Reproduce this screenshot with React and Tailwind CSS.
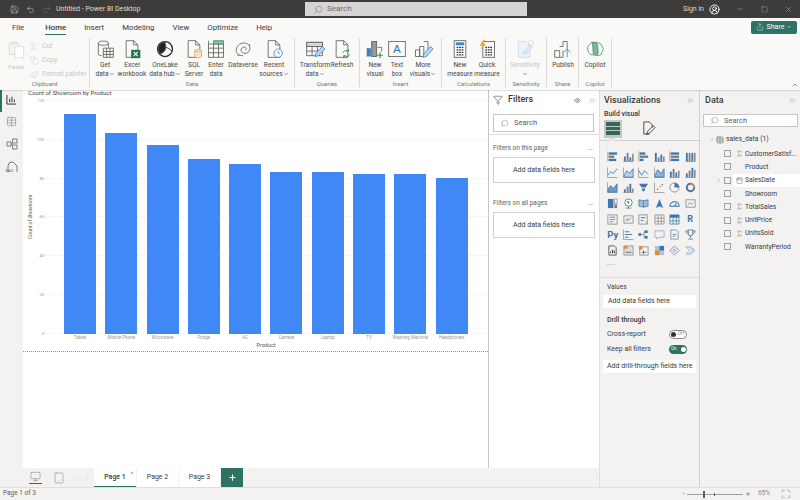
import React from 'react';
import {
  Save, Undo2, Redo2, Search, CircleUserRound, Minus, Square, X, ChevronDown, ChevronsRight,
  Eye, ChevronUp, Plus, Monitor, Tablet, Scissors, Copy, Paintbrush, ChevronRight, Sigma,
  Calendar, Table, ChevronLeft, Share, Filter, Maximize
} from 'lucide-react';

const FONT = 'font-["Roboto","Open_Sans",sans-serif]';
const BLUE = '#3f88f5';
const GREY = '#605e5c';

const Ic = ({ children, size = 20 }) => (
  <svg viewBox="0 0 24 24" width={size} height={size} fill="none" stroke={GREY} strokeWidth="1">
    {children}
  </svg>
);

const Doc = ({ color = GREY }) => <path d="M5 2h9l5 5v15H5zM14 2v5h5" stroke={color} />;

const ribbonIcons = {
  get: <Ic><ellipse cx="10" cy="5" rx="6" ry="2.5" /><path d="M4 5v13c0 1 1 2 4 2M16 5v5" /><path d="M10 11h12v11H10zM10 15h12M10 18.500h12M14 11v11M18 11v11" /></Ic>,
  excel: <Ic><Doc /><rect x="11" y="13" width="11" height="10" fill="#217346" stroke="none" /><path d="M14 15.500l5 5M19 15.500l-5 5" stroke="#fff" strokeWidth="1.300" /></Ic>,
  lake: <Ic><circle cx="12" cy="12" r="9" stroke="#252423" strokeWidth="1.500" /><path d="M12 3a9 9 0 0 0-6 15c4-1 7-4 7-8s-1-5-1-7z" fill="#252423" /><path d="M13 10c3 1 6 3 8 5" stroke="#252423" /></Ic>,
  sql: <Ic><Doc /><path d="M13 14c0-2 8-2 8 0v7c0 2-8 2-8 0z" fill="#fbe6c8" stroke="#d9a55b" /><path d="M13 14c0 2 8 2 8 0" stroke="#d9a55b" /></Ic>,
  enter: <Ic><path d="M3 6h18v16H3zM3 11h18M3 16.500h18M9 6v16M15 6v16" /><path d="M3 2v4M9 2h12v4H9z" fill="#8cbfa0" stroke="#3f8f60" /></Ic>,
  dataverse: <Ic><path d="M12 20c-6 0-9-4-8-8 1-5 6-8 11-7 4 1 6 4 5 8-1 3-4 5-7 4-3-1-4-3-3-5 1-2 3-3 5-2 1 1 1 3 0 3" /><path d="M8 19c-1 1-2 1-3 0M19 6c1 1 1 2 1 3" /></Ic>,
  recent: <Ic><Doc /><circle cx="17" cy="17" r="5" fill="#fff" stroke="#3a86c8" /><path d="M17 14.500V17l2 1" stroke="#3a86c8" /></Ic>,
  transform: <Ic><path d="M2 4h19v16H2zM2 9h19M2 14.500h19M8.500 4v16M15 4v16" /><path d="M2 4h19v5H2z" fill="#d8d6d4" /><path d="M12 21l1-4 8-8 3 3-8 8z" fill="#bcd8f0" stroke="#3a86c8" /></Ic>,
  refresh: <Ic><Doc /><path d="M13 17a4 4 0 0 1 7-2M21 18a4 4 0 0 1-7 2" stroke="#3f8f60" /><path d="M20 12v3h-3M14 23v-3h3" stroke="#3f8f60" /></Ic>,
  visual: <Ic><rect x="2" y="11" width="5" height="10" fill="#3f7fb8" stroke="none" /><rect x="8" y="3" width="6" height="18" fill="#9a9896" stroke="#605e5c" /><path d="M15 10h5v5" /><path d="M18 16v7M14.500 19.500h7" stroke="#3f8f60" strokeWidth="1.400" /></Ic>,
  textbox: <Ic><rect x="2" y="3" width="20" height="18" /><text x="12" y="17" fontSize="14" textAnchor="middle" fill="#2b7cc4" stroke="none" fontFamily="Liberation Sans">A</text></Ic>,
  more: <Ic><path d="M3 13h5v8H3zM8 9h5v12H8zM13 3h5v12" /><path d="M12 22l1-4 8-9 3 3-8 9z" fill="#bcd8f0" stroke="#3a86c8" /></Ic>,
  measure: <Ic><rect x="5" y="2" width="14" height="20" /><rect x="7" y="4" width="10" height="3.500" fill="#3a86c8" stroke="none" /><path d="M8 10h2M11 10h2M14 10h2M8 13h2M11 13h2M14 13h2M8 16h2M11 16h2M14 16h2M8 19h2M11 19h2M14 19h2" stroke="#323130" strokeWidth="1.500" /></Ic>,
  quick: <Ic><rect x="7" y="3" width="14" height="19" /><path d="M10 10h2M13 10h2M16 10h2M10 13h2M13 13h2M16 13h2M10 16h2M13 16h2M16 16h2M10 19h2M13 19h2M16 19h2" stroke="#323130" strokeWidth="1.500" /><path d="M8 1L3 8h3l-2 5 7-7H8l2-5z" fill="#eda63f" stroke="none" /></Ic>,
  sensitivity: <Ic><path d="M4 3h10l4 4v15H4z" stroke="#c8d8e4" fill="#eef3f7" /><path d="M9 17l9-10 3 3-9 9z" stroke="#c8d8e4" fill="#dde8f0" /><circle cx="19" cy="5" r="3" stroke="#c8d8e4" /></Ic>,
  publish: <Ic><path d="M2 14h6v8H2zM8 9h4v-6h5v9M12 14v8H8" /><path d="M17 22V12M13 16l4-4 4 4" stroke="#3a86c8" /></Ic>,
  copilot: <Ic size={20}><path d="M8 4h7l4 2 3 6-3 7-4 1-2-4-1-8z" fill="#fff" stroke="#4d8f70" /><path d="M8 4L3 10l1 6 3 3h8l-2-4-1-8z" fill="#fff" stroke="#4d8f70" /><path d="M9 5l3-1 3 2 1 11-3 3-3-2z" fill="#7fb897" stroke="#4d8f70" /></Ic>,
};

const Caret = () => <ChevronDown size={6} strokeWidth={2.500} className="inline-block text-[#605e5c]" />;

const RibbonButton = ({ icon, lines, w, caret, dim }) => (
  <div className={`flex flex-col items-center shrink-0 ${w}`}>
    <div className="h-[22px] flex items-center justify-center">{ribbonIcons[icon]}</div>
    <div className={`text-center text-[6.600px] leading-[9px] whitespace-nowrap mt-[1px] ${dim ? 'text-[#c8c6c4]' : 'text-[#4a4846]'}`}>
      {lines.map((l, i) => (
        <div key={l}>
          {l}
          {caret && i === lines.length - 1 && <Caret />}
        </div>
      ))}
    </div>
  </div>
);

const RibbonGroup = ({ label, w, pad, children }) => (
  <div className={`flex flex-col shrink-0 border-r border-[#dcdad8] h-[49px] mt-[2px] ${w}`}>
    <div className={`flex flex-1 ${pad}`}>{children}</div>
    <div className="text-center text-[6px] leading-[7px] text-[#797775]">{label}</div>
  </div>
);

const Ribbon = () => (
  <div className="h-[54px] bg-[#f9f9f8] flex relative shadow-[0_1px_1px_rgba(0,0,0,0.12)] z-10">
    <RibbonGroup label="Clipboard" w="w-[90px]" pad="pl-[6px]">
      <div className="flex flex-col items-center w-[20px] shrink-0 text-[#c8c6c4]">
        <svg viewBox="0 0 24 24" width="19" height="22" fill="none" stroke="#dad8d6" strokeWidth="1"><path d="M3 5h12v14H3z" fill="#faf3e6" /><path d="M10 9h11v14H10z" fill="#fff" /><path d="M6 5V3h6v2" /></svg>
        <span className="text-[6px] mt-[2px]">Paste</span>
      </div>
      <div className="flex flex-col gap-[4px] text-[6.800px] leading-[10px] text-[#c8c6c4] ml-[4px] mt-[3px]">
        <div className="flex items-center gap-[3px]"><Scissors size={9} strokeWidth={1} />Cut</div>
        <div className="flex items-center gap-[3px]"><Copy size={9} strokeWidth={1} />Copy</div>
        <div className="flex items-center gap-[3px] whitespace-nowrap"><Paintbrush size={9} strokeWidth={1} />Format painter</div>
      </div>
    </RibbonGroup>
    <RibbonGroup label="Data" w="w-[205px]" pad="pl-[3px]">
      <RibbonButton icon="get" lines={['Get', 'data']} caret w="w-[24px]" />
      <RibbonButton icon="excel" lines={['Excel', 'workbook']} w="w-[30px]" />
      <RibbonButton icon="lake" lines={['OneLake', 'data hub']} caret w="w-[36px]" />
      <RibbonButton icon="sql" lines={['SQL', 'Server']} w="w-[22px]" />
      <RibbonButton icon="enter" lines={['Enter', 'data']} w="w-[22px]" />
      <RibbonButton icon="dataverse" lines={['Dataverse']} w="w-[32px]" />
      <RibbonButton icon="recent" lines={['Recent', 'sources']} caret w="w-[30px]" />
    </RibbonGroup>
    <RibbonGroup label="Queries" w="w-[65px]" pad="pl-[5px]">
      <RibbonButton icon="transform" lines={['Transform', 'data']} caret w="w-[30px]" />
      <RibbonButton icon="refresh" lines={['Refresh']} w="w-[24px]" />
    </RibbonGroup>
    <RibbonGroup label="Insert" w="w-[82px]" pad="pl-[5px]">
      <RibbonButton icon="visual" lines={['New', 'visual']} w="w-[20px]" />
      <RibbonButton icon="textbox" lines={['Text', 'box']} w="w-[24px]" />
      <RibbonButton icon="more" lines={['More', 'visuals']} caret w="w-[28px]" />
    </RibbonGroup>
    <RibbonGroup label="Calculations" w="w-[64px]" pad="pl-[4px]">
      <RibbonButton icon="measure" lines={['New', 'measure']} w="w-[28px]" />
      <RibbonButton icon="quick" lines={['Quick', 'measure']} w="w-[26px]" />
    </RibbonGroup>
    <RibbonGroup label="Sensitivity" w="w-[41px]" pad="pl-[1px]">
      <RibbonButton icon="sensitivity" lines={['Sensitivity', '']} caret dim w="w-[36px]" />
    </RibbonGroup>
    <RibbonGroup label="Share" w="w-[32px]">
      <RibbonButton icon="publish" lines={['Publish']} w="w-[32px]" />
    </RibbonGroup>
    <RibbonGroup label="Copilot" w="w-[33px]">
      <RibbonButton icon="copilot" lines={['Copilot']} w="w-[32px]" />
    </RibbonGroup>
    <ChevronUp size={8} className="absolute right-[1px] bottom-[1px] text-[#605e5c]" />
  </div>
);

const TitleBar = () => (
  <div className="h-[18px] bg-[#3e3c3a] flex items-center text-[#dedcda] shrink-0">
    <Save size={9} strokeWidth={1.200} className="ml-[10px]" />
    <Undo2 size={9} strokeWidth={1.200} className="ml-[7px]" />
    <Redo2 size={9} strokeWidth={1.200} className="ml-[7px] text-[#7a7876]" />
    <span className="ml-[5px] w-[249px] text-[7px]">Untitled - Power BI Desktop</span>
    <div className="w-[222px] h-[14px] bg-[#d6d5d4] flex items-center text-[#6e6c6a] text-[8px]">
      <Search size={9} strokeWidth={1.200} className="ml-[9px] -scale-x-100" />
      <span className="ml-[4px]">Search</span>
    </div>
    <span className="ml-auto text-[7px]">Sign in</span>
    <CircleUserRound size={11} className="ml-[5px] text-white" />
    <Minus size={8} strokeWidth={1} className="ml-[16px]" />
    <Square size={7} strokeWidth={1} className="ml-[17px]" />
    <X size={9} strokeWidth={1} className="ml-[16px] mr-[7px]" />
  </div>
);

const tabs = ['File', 'Home', 'Insert', 'Modeling', 'View', 'Optimize', 'Help'];

const TabBar = () => (
  <div className="h-[18px] bg-[#f9f9f8] flex items-center pl-[12px] gap-[18px] text-[7.800px] text-[#3b3a39] relative shrink-0">
    {tabs.map((t) => (
      <span
        key={t}
        className={t === 'Home' ? 'font-medium border-b-[1.500px] border-[#2e7263] leading-[13px] ml-[3px] mt-[1px]' : 'leading-[13px]'}
      >
        {t}
      </span>
    ))}
    <div className="ml-auto mr-[3px] w-[46px] h-[13px] rounded-[2px] bg-[#2e7263] text-white flex items-center justify-center gap-[2px] text-[7px]">
      <Share size={8} strokeWidth={1.200} />
      <span className="ml-[1px]">Share</span>
      <ChevronDown size={6} />
    </div>
  </div>
);

const Rail = () => (
  <div className="w-[23px] bg-[#f3f2f1] flex flex-col items-center shrink-0 relative pt-[4px] gap-[11px] text-[#605e5c]">
    <div className="absolute left-0 top-0 h-[22px] w-[2px] bg-[#2e7263]" />
    <svg viewBox="0 0 12 12" width="11" height="11" fill="none" stroke="#252423" strokeWidth="1"><path d="M1 1v10h10M4 9V5M6.500 9V3M9 9V6" /></svg>
    <Table size={11} strokeWidth={0.900} />
    <svg viewBox="0 0 12 12" width="12" height="12" fill="none" stroke="#605e5c" strokeWidth="0.800"><path d="M1 4h4v4H1zM6.500 1H11v4H6.500zM6.500 7H11v4H6.500zM5 6h1.500" /></svg>
    <div className="relative w-[12px] h-[12px]">
      <svg viewBox="0 0 12 12" width="12" height="12" fill="none" stroke="#605e5c" strokeWidth="0.800"><path d="M2 11V5a4 4 0 0 1 4-4h1l4 4v6" /></svg>
      <span className="absolute left-0 bottom-0 text-[4px] leading-[5px]">DAX</span>
    </div>
  </div>
);

const sales = [
  { name: 'Tablet', value: 113 },
  { name: 'Mobile Phone', value: 103 },
  { name: 'Microwave', value: 97 },
  { name: 'Fridge', value: 90 },
  { name: 'AC', value: 87 },
  { name: 'Camera', value: 83 },
  { name: 'Laptop', value: 83 },
  { name: 'TV', value: 82 },
  { name: 'Washing Machine', value: 82 },
  { name: 'Headphones', value: 80 },
];

const ticks = [120, 100, 80, 60, 40, 20, 0];

const Chart = () => (
  <div className="h-[262px] border-b border-dotted border-[#999] flex flex-col bg-white shrink-0">
    <div className="pl-[5px] h-[10px] text-[6px] leading-[6px] text-[#444]">Count of Showroom by Product</div>
    <div className="flex">
      <div className="w-[12px] h-[234px] flex items-center justify-center shrink-0">
        <span className="-rotate-90 whitespace-nowrap text-[5px] text-[#555] translate-x-[2px]">Count of Showroom</span>
      </div>
      <div className="w-[9px] h-[234px] flex flex-col justify-between items-end shrink-0 text-[4px] leading-[1px] text-[#999]">
        {ticks.map((t) => <span key={t}>{t}</span>)}
      </div>
      <div className="relative flex-1">
        <div className="absolute inset-0 flex flex-col justify-between h-[234px]">
          {ticks.map((t) => <div key={t} className="border-t border-dotted border-[#eeeeee]" />)}
        </div>
        <div className="relative h-[234px] flex items-end pl-[20px] gap-[9.300px]">
          {sales.map((s) => (
            <div key={s.name} className="w-[32px] shrink-0" style={{ height: `${(s.value / 120) * 234}px`, backgroundColor: BLUE }} />
          ))}
        </div>
        <div className="flex pl-[20px] gap-[9.300px] mt-[1px]">
          {sales.map((s) => (
            <div key={s.name} className="w-[32px] shrink-0 text-[4.500px] leading-[6px] text-[#999] whitespace-nowrap flex justify-center">{s.name}</div>
          ))}
        </div>
      </div>
    </div>
    <div className="text-center text-[5.500px] leading-[6px] text-[#555] pl-[21px] mt-[1px]">Product</div>
  </div>
);

const PageTabs = () => (
  <div className="h-[19px] bg-[#f3f2f1] flex items-stretch text-[7px] text-[#3b3a39] shrink-0">
    <div className="w-[24px] flex flex-col items-center justify-end ml-0">
      <Monitor size={11} strokeWidth={0.900} className="text-[#605e5c]" />
      <div className="w-[13px] h-[1.500px] bg-[#2e7263] mt-[1px] mb-[3px]" />
    </div>
    <div className="w-[24px] flex items-center justify-center"><Tablet size={12} strokeWidth={0.800} className="text-[#605e5c]" /></div>
    <div className="w-[23px] flex items-center justify-center gap-[5px] text-[#c8c6c4]">
      <ChevronLeft size={5} /><ChevronRight size={5} />
    </div>
    <div className="w-[42px] bg-white border-b-[1.500px] border-[#2e7263] flex items-center justify-center font-medium relative">
      Page 1
      <X size={4} strokeWidth={2} className="absolute right-[2px] top-[3px]" />
    </div>
    <div className="w-[42px] bg-white border-l border-[#f3f2f1] flex items-center justify-center">Page 2</div>
    <div className="w-[42px] bg-white border-l border-[#f3f2f1] flex items-center justify-center">Page 3</div>
    <div className="w-[22px] ml-[1px] bg-[#2e7263] flex items-center justify-center text-white"><Plus size={9} strokeWidth={3} /></div>
  </div>
);

const SearchBox = ({ h, w }) => (
  <div className={`bg-white border border-[#c8c6c4] flex items-center text-[7.500px] text-[#605e5c] ${h} ${w}`}>
    <Search size={9} strokeWidth={1} className="ml-[6px] -scale-x-100" />
    <span className="ml-[5px]">Search</span>
  </div>
);

const Dropzone = ({ title }) => (
  <div className="mx-[4px]">
    <div className="flex justify-between items-center h-[11px] text-[6.500px] text-[#605e5c] pr-[3px]">
      <span>{title}</span><span>...</span>
    </div>
    <div className="mt-[3px] h-[26px] w-[102px] border border-[#d2d0ce] flex items-center justify-center text-[7px] text-[#3b3a39]">Add data fields here</div>
  </div>
);

const Filters = () => (
  <div className="w-[112px] bg-white border-l border-[#c8c6c4] flex flex-col shrink-0 mb-[19px]">
    <div className="flex items-center h-[24px] pl-[4px] pr-[3px] pb-[4px]">
      <Filter size={10} strokeWidth={1.300} className="text-[#3b3a39]" />
      <span className="ml-[5px] text-[9px] font-medium text-[#3b3a39]">Filters</span>
      <Eye size={7} className="ml-auto text-[#605e5c]" />
      <ChevronsRight size={9} strokeWidth={1} className="ml-[7px] text-[#605e5c]" />
    </div>
    <div className="px-[4px] pb-[2px] border-b border-[#e1dfdd]">
      <SearchBox h="h-[18px]" w="w-[101px]" />
    </div>
    <div className="mt-[8px]"><Dropzone title="Filters on this page" /></div>
    <div className="mt-[15px]"><Dropzone title="Filters on all pages" /></div>
  </div>
);

const B = '#3a78ad';
const G = '#7f7d7b';
const O = '#dd8f3a';

const hb = (a, b, c) => (
  <>
    <path d="M1 0.500v11" stroke={G} strokeWidth="0.800" />
    <rect x="2" y="1.500" width={a} height="2.500" fill={B} />
    <rect x="2" y="5" width={b} height="2.500" fill={G} />
    <rect x="2" y="8.500" width={c} height="2.500" fill={B} />
  </>
);
const vb = (a, b, c, d) => (
  <>
    <path d="M0.500 11.500h11" stroke={G} strokeWidth="0.800" />
    <rect x="1" y={11 - a} width="2" height={a} fill={B} />
    <rect x="4" y={11 - b} width="2" height={b} fill={G} />
    <rect x="7" y={11 - c} width="2" height={c} fill={B} />
    <rect x="10" y={11 - d} width="1.500" height={d} fill={G} />
  </>
);
const ln = (d, fill) => (
  <>
    <path d="M0.500 0.500v11h11" stroke={G} strokeWidth="0.700" fill="none" />
    <path d={d} stroke={B} strokeWidth="0.900" fill={fill || 'none'} />
  </>
);
const box = <path d="M1 2h10v8H1z" stroke={G} strokeWidth="0.800" fill="none" />;

const TextIcon = ({ t, size }) => (
  <span className={`font-bold text-[#3a78ad] leading-[12px] ${size}`}>{t}</span>
);

const vizIcons = [
  hb(9, 6, 8), vb(5, 9, 4, 8), hb(6, 9, 4), vb(9, 4, 7, 5), hb(9, 9, 9), vb(9, 9, 9, 9),
  ln('M1 9l3-4 3 2 4-5'), ln('M1 10l3-6 3 3 4-5V11H1z', '#bcd3e6'), ln('M1 4l3 5 3-5 4 4'), ln('M1 9l3-6 4 4 3-5V11H1z', '#8fb3d1'), vb(6, 9, 5, 7), vb(4, 7, 10, 8),
  ln('M1 8l3-4 3 3 4-5V11H1z', '#6f9cc2'), vb(3, 6, 9, 4),
  <path d="M1 2h10L8 6H4zM4 7h4l-1 3H5z" fill={B} />,
  <><path d="M0.500 0.500v11h11" stroke={G} strokeWidth="0.700" fill="none" /><circle cx="4" cy="8" r="0.800" fill={B} /><circle cx="7" cy="5" r="0.800" fill={O} /><circle cx="9" cy="3" r="0.800" fill={B} /></>,
  <><circle cx="6" cy="6" r="5" fill="none" stroke={G} strokeWidth="0.900" /><path d="M6 1a5 5 0 0 1 5 5H6z" fill={B} /></>,
  <><circle cx="6" cy="6" r="4" fill="none" stroke={B} strokeWidth="2.200" /><path d="M6 2a4 4 0 0 1 4 4" stroke={O} strokeWidth="2.200" fill="none" /></>,
  <><rect x="1" y="1" width="6" height="10" fill={B} /><rect x="8" y="1" width="3" height="5" fill="none" stroke={G} strokeWidth="0.700" /><rect x="8" y="7" width="3" height="4" fill={G} /></>,
  <><circle cx="6" cy="5" r="4" fill="#fff" stroke="#4d8f70" /><path d="M4 3l3 1-1 3z" fill={B} /><path d="M6 9v2M3 11h6" stroke={G} /></>,
  <path d="M1 2c2 0 3 1 5 1s3-1 5-1v7c-2 0-3 1-5 1s-3-1-5-1zM6 3v7" fill="#9dbcd6" stroke={B} strokeWidth="0.800" />,
  <path d="M6 1l4 10-4-2-4 2z" fill={B} />,
  <path d="M1 9a5 5 0 0 1 10 0zM6 9l2-3" fill="none" stroke={B} strokeWidth="1.200" />,
  <><rect x="1" y="2" width="10" height="8" fill="none" stroke={G} strokeWidth="0.800" /><path d="M3 8l2-3 2 2 2-2" stroke={B} fill="none" strokeWidth="0.700" /></>,
  <><rect x="1" y="1" width="10" height="10" fill="none" stroke={G} strokeWidth="0.800" /><path d="M3 3.500h6M3 6h6M3 8.500h4" stroke={B} strokeWidth="0.800" /></>,
  <>{box}<path d="M3 8l2-3 1 2 3-3" stroke={B} strokeWidth="0.800" fill="none" /></>,
  <><rect x="1" y="1" width="9" height="10" fill="none" stroke={G} strokeWidth="0.800" /><path d="M3 4h5M3 7h3" stroke={B} /><path d="M8 8l3 3" stroke={O} /></>,
  <path d="M1 1h10v10H1zM1 4.500h10M1 8h10M4.500 1v10M8 1v10" stroke={G} strokeWidth="0.700" fill="none" />,
  <><rect x="1" y="1" width="10" height="3" fill={B} /><path d="M1 1h10v10H1zM1 7.500h10M4.500 1v10M8 1v10" stroke={B} strokeWidth="0.800" fill="none" /></>,
  <TextIcon t="R" size="text-[9px]" />,
  <TextIcon t="Py" size="text-[9.500px]" />,
  <><path d="M0.500 0.500v11h11" stroke={G} strokeWidth="0.700" fill="none" /><path d="M2 3h5M2 6h8M2 9h4" stroke={B} /></>,
  <><rect x="0.500" y="4.500" width="3" height="3" fill={B} /><path d="M3.500 6h3M6.500 3v6" stroke={G} strokeWidth="0.700" /><rect x="7" y="1.500" width="3.500" height="3" fill={B} /><rect x="7" y="7.500" width="3.500" height="3" fill={B} /></>,
  <path d="M1 2h10v7H5l-2 2V9H1z" fill="none" stroke="#7fa6c6" strokeWidth="0.800" />,
  <><path d="M2 1h6l2 2v8H2z" fill="none" stroke={G} strokeWidth="0.800" /><path d="M4 6h4M4 8h3" stroke={B} strokeWidth="0.800" /></>,
  <><path d="M3.500 1h5v4a2.500 2.500 0 0 1-5 0zM6 7.500V10M3.500 11h5M3.500 2H1c0 2 1 3 2.500 3M8.500 2H11c0 2-1 3-2.500 3" fill="none" stroke="#4d6f88" strokeWidth="0.900" /></>,
  <><path d="M2 1h6l2 2v8H2z" fill="none" stroke="#323130" strokeWidth="0.800" /><path d="M4 9V7M6 9V5M8 9V6" stroke="#323130" /></>,
  <><rect x="1" y="1" width="10" height="10" fill="#dedcda" stroke={G} strokeWidth="0.700" /><path d="M1 1h4v3H1z" fill={O} /><path d="M3 8h6" stroke={B} /></>,
  <><rect x="2" y="2" width="9" height="9" fill="none" stroke={G} strokeWidth="0.800" /><path d="M1 1h4v4H1z" fill={O} /><path d="M4 8h5M6 6v4" stroke={B} /></>,
  <><rect x="1" y="1" width="10" height="10" fill="#a9c6de" /><path d="M1 6h5v5H1z" fill={O} /><path d="M6 1h5v5H6z" fill={B} /></>,
  <><path d="M6 1l5 5-5 5-5-5z" fill="none" stroke="#8a76b8" strokeWidth="0.900" /><circle cx="6" cy="6" r="1.500" fill="none" stroke="#8a76b8" strokeWidth="0.700" /></>,
  <path d="M1 2h5l5 4-5 4H1l4-4zM4 2l5 4-5 4" fill="none" stroke="#7fa6c6" strokeWidth="0.800" />,
];

const VizGrid = () => (
  <div className="grid grid-cols-[repeat(6,15.500px)] auto-rows-[15.600px] pl-[5px] mt-[8px]">
    {vizIcons.map((icon, i) => (
      <div key={i} className="flex items-center justify-center">
        {i === 29 || i === 30 ? icon : <svg viewBox="0 0 12 12" width="11" height="11">{icon}</svg>}
      </div>
    ))}
    <div className="col-span-6 h-[12px] pl-[2px] text-[7px] leading-[10px] tracking-[1px] text-[#605e5c]">...</div>
  </div>
);

const Toggle = ({ on }) =>
  on ? (
    <div className="w-[18px] h-[9px] rounded-full bg-[#2e7263] flex items-center justify-between pl-[2px] pr-[1px] text-white text-[4.500px]">
      On<div className="w-[5px] h-[5px] rounded-full bg-white" />
    </div>
  ) : (
    <div className="w-[18px] h-[9px] rounded-full bg-white border border-[#8a8886] flex items-center justify-between pl-[1px] pr-[2px] text-[#8a8886] text-[4.500px]">
      <div className="w-[4.500px] h-[4.500px] rounded-full bg-[#323130]" />Off
    </div>
  );

const Visualizations = () => (
  <div className="w-[100px] bg-[#f3f2f1] border-l border-[#e1dfdd] flex flex-col shrink-0">
    <div className="flex items-center justify-between h-[20px] pl-[4px] pr-[4px] pt-[1px]">
      <span className="text-[9px] font-medium text-[#3b3a39]">Visualizations</span>
      <ChevronsRight size={9} strokeWidth={1} className="text-[#605e5c]" />
    </div>
    <div className="pl-[4px] text-[7px] font-medium text-[#3b3a39] leading-[9px]">Build visual</div>
    <div className="flex items-center h-[22px] pl-[4px] pb-[2px] relative border-b border-[#d2d0ce]">
      <div className="w-[18px] h-[18px] bg-[#c8c6c4] flex flex-col justify-center gap-[1px] px-[2px]">
        <div className="h-[3.500px] bg-[#2e6a58]" /><div className="h-[3.500px] bg-[#2e6a58]" /><div className="h-[3.500px] bg-[#2e6a58]" />
      </div>
      <svg viewBox="0 0 16 16" width="15" height="15" fill="none" stroke="#323130" strokeWidth="0.900" className="ml-[19px]">
        <path d="M3 1h6l3 3v3M3 1v13h6M6 14l1-3 6-6 2 2-6 6z" />
      </svg>
      <div className="absolute left-[10px] -bottom-[3px] w-[5px] h-[5px] rotate-45 bg-[#f3f2f1] border-l border-t border-[#d2d0ce]" />
    </div>
    <VizGrid />
    <div className="border-t border-[#e1dfdd] mt-[3px] pl-[7px] pt-[5px] text-[6.500px] leading-[8px] text-[#3b3a39]">Values</div>
    <div className="mx-[3px] mt-[4px] h-[13px] bg-white flex items-center pl-[5px] text-[7px] text-[#3b3a39]">Add data fields here</div>
    <div className="pl-[7px] mt-[8px] text-[7px] font-medium leading-[8px] text-[#3b3a39]">Drill through</div>
    <div className="flex items-center justify-between pl-[7px] pr-[12px] mt-[5px] h-[11px] text-[7px] text-[#3b3a39]">Cross-report<Toggle /></div>
    <div className="flex items-center justify-between pl-[7px] pr-[12px] mt-[4px] h-[11px] text-[7px] text-[#3b3a39]">Keep all filters<Toggle on /></div>
    <div className="mx-[3px] mt-[5px] h-[13px] bg-white flex items-center pl-[4px] text-[7px] text-[#3b3a39]">Add drill-through fields here</div>
  </div>
);

const fields = [
  { name: 'CustomerSatisf...', icon: 'sum' },
  { name: 'Product' },
  { name: 'SalesDate', icon: 'date', active: true },
  { name: 'Showroom' },
  { name: 'TotalSales', icon: 'sum' },
  { name: 'UnitPrice', icon: 'sum' },
  { name: 'UnitsSold', icon: 'sum' },
  { name: 'WarrantyPeriod' },
];

const DataPane = () => (
  <div className="w-[101px] bg-[#f3f2f1] border-l border-[#d2d0ce] flex flex-col shrink-0">
    <div className="flex items-center justify-between h-[20px] pl-[5px] pr-[3px] pt-[1px]">
      <span className="text-[9px] font-medium text-[#3b3a39]">Data</span>
      <ChevronsRight size={9} strokeWidth={1} className="text-[#605e5c]" />
    </div>
    <div className="pl-[3px] mt-[4px]"><SearchBox h="h-[13px]" w="w-[95px]" /></div>
    <div className="flex items-center h-[13px] pl-[8px] mt-[6px] mb-[1px] text-[6.800px] text-[#3b3a39]">
      <ChevronDown size={7} strokeWidth={1} className="text-[#605e5c]" />
      <Table size={8} strokeWidth={1.200} className="ml-[1px] text-[#323130]" />
      <span className="ml-[2px]">sales_data (1)</span>
    </div>
    {fields.map((f) => (
      <div key={f.name} className="flex items-center h-[13.300px] pl-[17px] text-[6.700px] text-[#3b3a39] relative">
        {f.active && <ChevronRight size={7} strokeWidth={1} className="absolute left-[15px] text-[#605e5c]" />}
        <div className="w-[7px] h-[7px] border border-[#a19f9d] bg-[#f3f2f1] ml-[7px] shrink-0" />
        <div className={`flex items-center h-full flex-1 ml-[2px] ${f.active ? 'bg-white' : ''}`}>
          <div className="w-[12px] flex justify-center shrink-0">
            {f.icon === 'sum' && <Sigma size={7} strokeWidth={1.200} />}
            {f.icon === 'date' && <Calendar size={7} strokeWidth={1.200} />}
          </div>
          <span className="whitespace-nowrap">{f.name}</span>
        </div>
      </div>
    ))}
  </div>
);

const StatusBar = () => (
  <div className="h-[13px] bg-[#f3f2f1] border-t border-[#e1dfdd] flex items-center pl-[3px] text-[6.500px] text-[#605e5c] shrink-0">
    <span>Page 1 of 3</span>
    <span className="ml-auto text-[7px] leading-none">-</span>
    <div className="ml-[2px] w-[56px] h-[1px] bg-[#a19f9d] relative">
      <div className="absolute left-[16px] -top-[3px] w-[2px] h-[7px] bg-[#605e5c]" />
      <div className="absolute left-[27px] -top-[1px] w-[1px] h-[3px] bg-[#605e5c]" />
    </div>
    <Plus size={6} className="ml-[2px]" />
    <span className="ml-[7px] text-[#8a8886]">65%</span>
    <Maximize size={10} strokeWidth={1} className="ml-[11px] mr-[9px]" />
  </div>
);

export default function App() {
  return (
    <div className={`w-[800px] h-[500px] overflow-hidden flex flex-col bg-[#f3f2f1] ${FONT}`}>
      <TitleBar />
      <TabBar />
      <Ribbon />
      <div className="flex flex-1 min-h-0">
        <Rail />
        <div className="flex-1 min-w-0 flex flex-col">
          <div className="flex flex-1 min-h-0">
            <div className="w-[465px] shrink-0 bg-white flex flex-col">
              <Chart />
              <div className="flex-1" />
              <PageTabs />
            </div>
            <Filters />
          </div>
        </div>
        <Visualizations />
        <DataPane />
      </div>
      <StatusBar />
    </div>
  );
}
